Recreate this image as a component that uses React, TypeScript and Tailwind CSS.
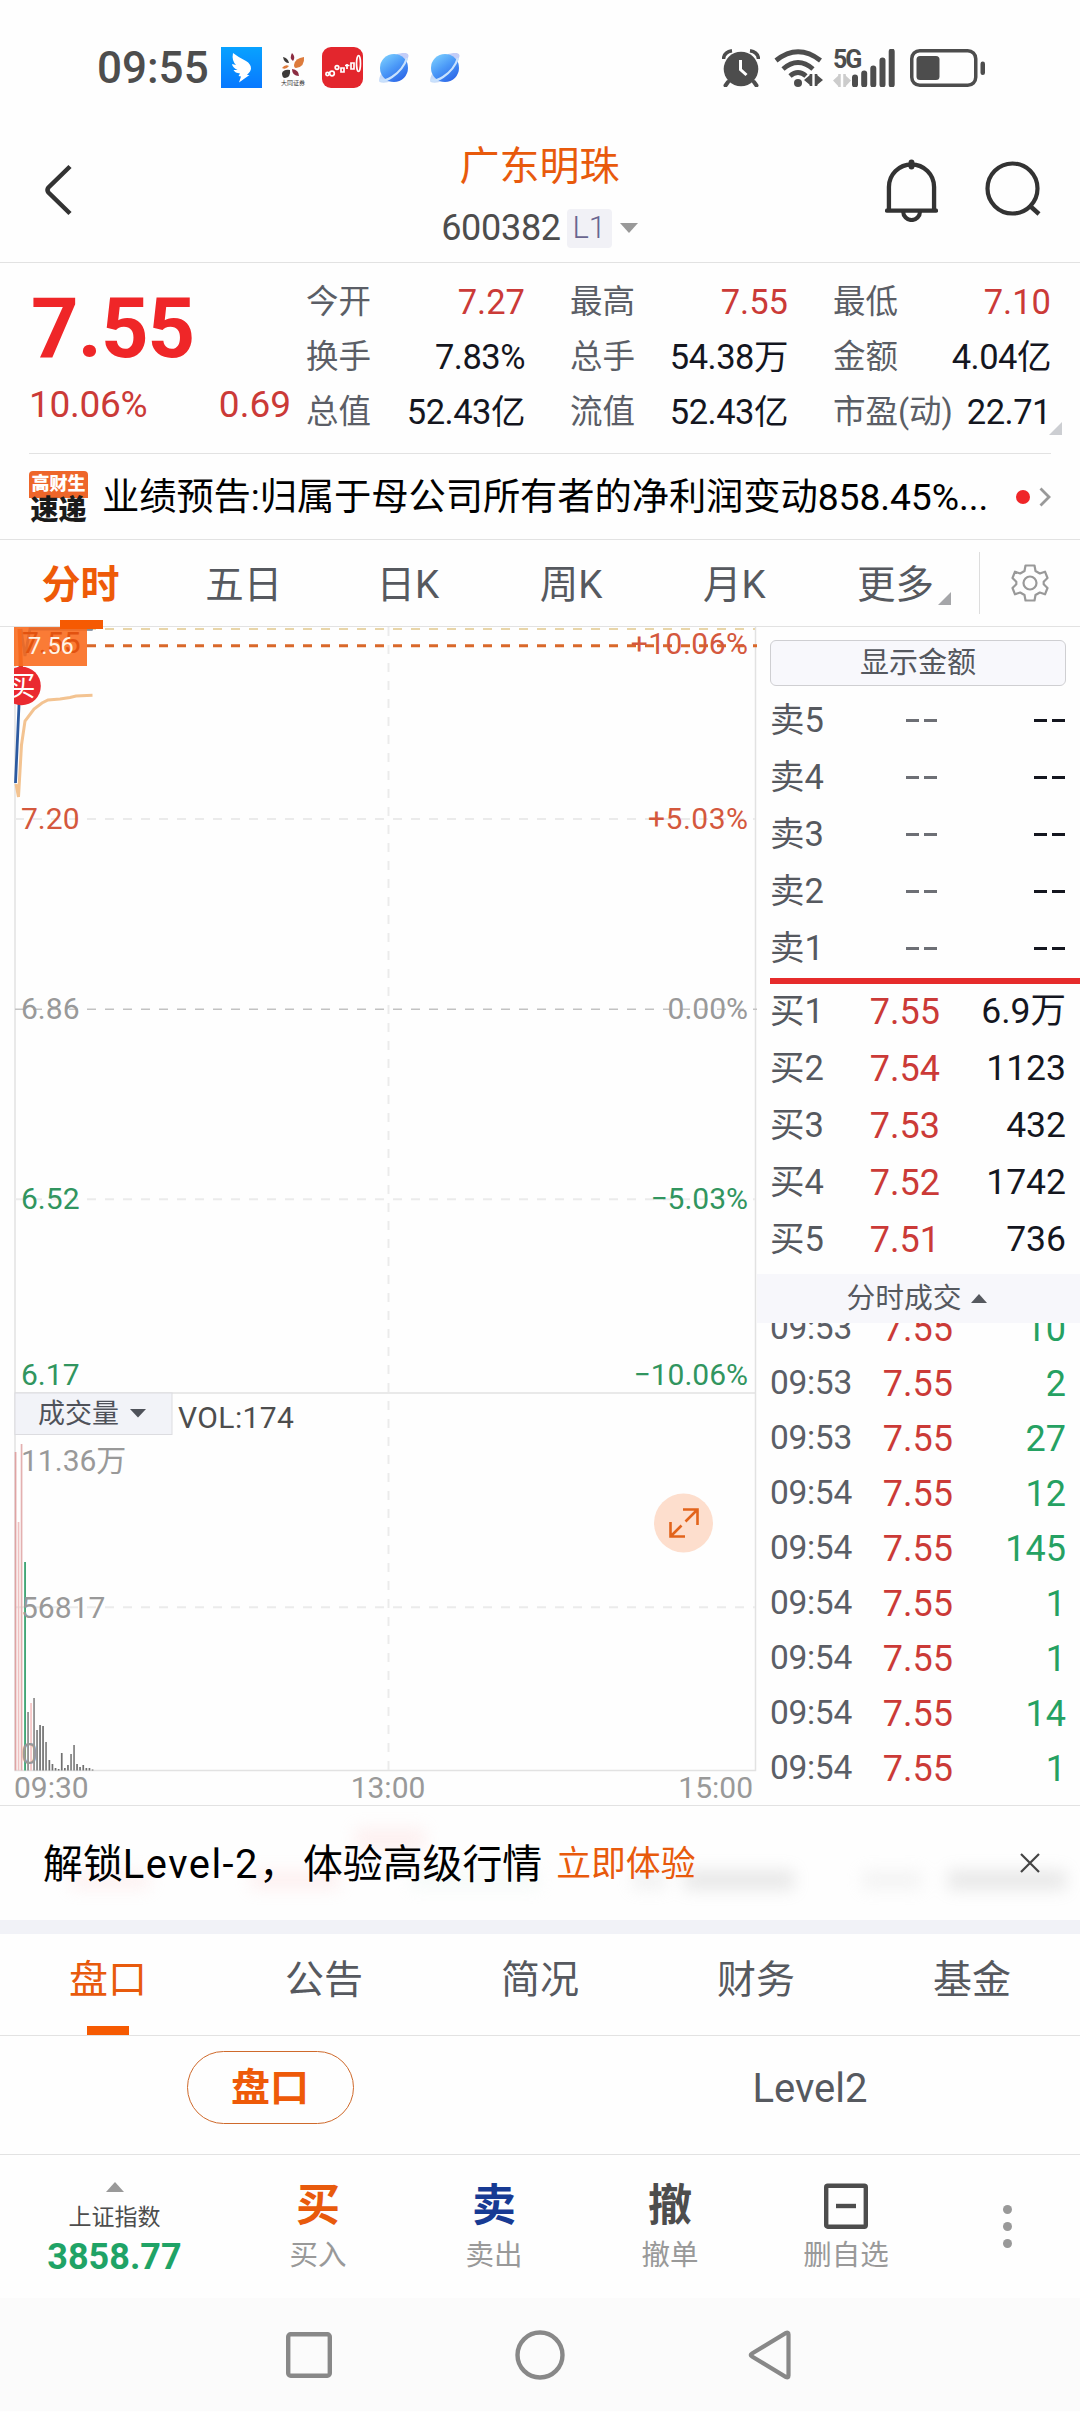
import React from "react";

type Tone = "red" | "dark";

const stats: { label: string; value: string; tone: Tone }[] = [
  { label: "今开", value: "7.27", tone: "red" },
  { label: "最高", value: "7.55", tone: "red" },
  { label: "最低", value: "7.10", tone: "red" },
  { label: "换手", value: "7.83%", tone: "dark" },
  { label: "总手", value: "54.38万", tone: "dark" },
  { label: "金额", value: "4.04亿", tone: "dark" },
  { label: "总值", value: "52.43亿", tone: "dark" },
  { label: "流值", value: "52.43亿", tone: "dark" },
  { label: "市盈(动)", value: "22.71", tone: "dark" },
];

const bids: [string, string, string][] = [
  ["买1", "7.55", "6.9万"],
  ["买2", "7.54", "1123"],
  ["买3", "7.53", "432"],
  ["买4", "7.52", "1742"],
  ["买5", "7.51", "736"],
];

const trades: [string, string, string][] = [
  ["09:53", "7.55", "10"],
  ["09:53", "7.55", "2"],
  ["09:53", "7.55", "27"],
  ["09:54", "7.55", "12"],
  ["09:54", "7.55", "145"],
  ["09:54", "7.55", "1"],
  ["09:54", "7.55", "1"],
  ["09:54", "7.55", "14"],
  ["09:54", "7.55", "1"],
];

/* Volume bars: x centre, top y, colour */
const bars: [number, number, string][] = [
  [15.5, 1452, "#dfa3a3"],
  [18.5, 1522, "#efc0c0"],
  [21.5, 1444, "#e3b0b0"],
  [25, 1562, "#2f9d68"],
  [28, 1712, "#8a8a8a"],
  [31, 1703, "#f5c4c4"],
  [34, 1698, "#8a8a8a"],
  [37, 1730, "#808080"],
  [40, 1725, "#707070"],
  [43, 1726, "#707070"],
  [46, 1742, "#808080"],
  [49.3, 1760, "#707070"],
  [52.4, 1764, "#707070"],
  [55.5, 1768, "#707070"],
  [58.6, 1769, "#707070"],
  [61.7, 1753, "#707070"],
  [64.8, 1768, "#707070"],
  [67.9, 1765, "#707070"],
  [71, 1754, "#808080"],
  [74, 1745, "#808080"],
  [77, 1764, "#707070"],
  [80, 1767, "#707070"],
  [83.2, 1765, "#707070"],
  [86.3, 1768, "#707070"],
  [89.4, 1768, "#707070"],
  [92.5, 1769.5, "#707070"],
];

function Planet() {
  return (
    <svg width="30" height="30" viewBox="0 0 30 30">
      <defs>
        <linearGradient id="planet" x1="0.1" y1="0" x2="0.8" y2="1">
          <stop offset="0" stopColor="#7fd2ff" />
          <stop offset="0.5" stopColor="#4a98f7" />
          <stop offset="1" stopColor="#2a62e6" />
        </linearGradient>
      </defs>
      <path d="M18 1 Q30 -2 29.5 3 Q29 8 25 13 L15 12Z" fill="#c3cdf8" />
      <path d="M4 18 Q-1 25 0.5 29 Q5 31 13 28Z" fill="#c6daf8" />
      <circle cx="15" cy="15" r="14" fill="url(#planet)" />
      <path d="M1 27 Q5 29 13 24 Q24 17 28 5" fill="none" stroke="#c9e2fd" strokeWidth="2.2" />
    </svg>
  );
}

function StatusBar() {
  return (
    <div className="flex h-[135px] items-center pl-[97px] pr-[94px] text-[#4d4d4d]">
      <span className="w-[124px] text-[44px] font-medium leading-[44px]">09:55</span>
      <svg width="41" height="41" viewBox="0 0 41 41" className="shrink-0">
        <defs>
          <linearGradient id="wing" x1="0" y1="0" x2="0" y2="1">
            <stop offset="0" stopColor="#08a2ff" />
            <stop offset="1" stopColor="#0878ff" />
          </linearGradient>
        </defs>
        <rect width="41" height="41" fill="url(#wing)" />
        <path d="M12 6 Q17 10 25 14 Q30 17 30 21.500 Q30 24 26 28 L28.500 28 L18 35.500 L20 29.500 L17.500 29 L19 26.500 Q14 26 12.500 23 L16.500 23 Q11.500 20.500 11 17 L15 18 Q10.500 13.500 12 6Z" fill="#fff" />
      </svg>
      <div className="ml-[17px] flex w-[28px] shrink-0 flex-col items-center pt-1">
        <svg width="24" height="26" viewBox="0 0 24 26">
          <path d="M2 4 Q7 5 8 10 Q3 10 2 4Z" fill="#3d3a39" />
          <path d="M11 0 Q15 4 12 8 Q8 5 11 0Z" fill="#8c2c42" />
          <path d="M23 4 Q24 14 15 15 Q13 15 13 12 Q14 5 23 4Z" fill="#dd7b3c" />
          <path d="M1 15 Q4 11 8 13 Q5 17 1 15Z" fill="#dd7b3c" />
          <path d="M11 16 Q18 17 18 23 Q11 23 11 16Z" fill="#8c2c42" />
          <path d="M1 20 Q3 16 9 17 Q10 24 4 25 Q1 25 1 20Z" fill="#3d3a39" />
        </svg>
        <span className="whitespace-nowrap text-[6px] leading-[8px] text-[#333]">大同证券</span>
      </div>
      <svg width="41" height="41" viewBox="0 0 41 41" className="ml-[15px] shrink-0">
        <rect width="41" height="41" rx="9" fill="#e3262d" />
        <g fill="none" stroke="#fff" strokeWidth="1.700">
          <circle cx="5.500" cy="27" r="1.600" />
          <circle cx="10" cy="26.500" r="2.300" />
          <circle cx="15" cy="20.500" r="1.800" />
          <path d="M19 21h3v4h-3z M25 17v5 M23 18.500h4.500 M29 16h3v6h-3z" />
          <ellipse cx="36.500" cy="16.500" rx="2" ry="8" />
        </g>
      </svg>
      <div className="ml-[16px] flex gap-[21px]">
        <Planet />
        <Planet />
      </div>
      <svg width="38" height="38" viewBox="0 0 38 38" className="ml-auto shrink-0">
        <circle cx="19" cy="20" r="17.300" fill="#4d4d4d" />
        <path d="M6 33 L3.500 36.500 M32 33 L34.500 36.500" stroke="#4d4d4d" strokeWidth="4" strokeLinecap="round" />
        <path d="M1.500 10 Q2 3 10 1.800 M36.500 10 Q36 3 28 1.800" stroke="#4d4d4d" strokeWidth="3.500" fill="none" />
        <path d="M18.500 11v9.500l6 5.500" fill="none" stroke="#fff" strokeWidth="3" />
      </svg>
      <svg width="49" height="38" viewBox="0 0 49 38" className="ml-[14px] shrink-0">
        <g fill="none" stroke="#4d4d4d" strokeWidth="4.800">
          <path d="M2 11.500 Q24 -6 46.500 11.500" />
          <path d="M9 20 Q24 7 39 20" />
          <path d="M16 27 Q24 20 32 27" />
        </g>
        <circle cx="24" cy="34" r="4" fill="#4d4d4d" />
        <path d="M37 25v12M42 25v12" stroke="#4d4d4d" strokeWidth="2.600" />
        <path d="M36 26v10l-6-5zM43 26v10l6-5z" fill="#4d4d4d" />
      </svg>
      <div className="ml-[10px] flex h-[38px] items-end">
        <div className="flex h-full w-[19px] flex-col justify-between">
          <span className="-mt-[1px] text-[25px] font-bold leading-[23px] tracking-[-2px]">5G</span>
          <svg width="18" height="13" viewBox="0 0 18 13">
            <path d="M0 6.500 6 1v12zM18 6.500 12 1v12z" fill="#ccc" />
            <path d="M6.500 0v13M11.500 0v13" stroke="#ccc" strokeWidth="2.500" />
          </svg>
        </div>
        <svg width="44" height="38" viewBox="0 0 44 38">
          <path d="M3 28.500V35.500M12.200 24.500V35.500M21.300 19.500V35.500M30.500 11.500V35.500M39.700 2.500V35.500" stroke="#4d4d4d" strokeWidth="6" strokeLinecap="round" />
        </svg>
      </div>
      <svg width="76" height="38" viewBox="0 0 76 38" className="ml-[14px] shrink-0">
        <rect x="1.750" y="1.750" width="64" height="34.500" rx="8" fill="none" stroke="#4d4d4d" strokeWidth="3.500" />
        <rect x="6.500" y="7" width="23" height="24" rx="3.500" fill="#4d4d4d" />
        <rect x="70.500" y="12.500" width="4.500" height="13.500" rx="2.200" fill="#4d4d4d" />
      </svg>
    </div>
  );
}

function Header() {
  return (
    <div className="flex h-[128px] items-start justify-between border-b border-[#e2e2e2] pl-[45px] pr-[39px]">
      <div className="w-[149px] pt-[29px]">
        <svg width="28" height="52" viewBox="0 0 28 52">
          <path d="M25 2.500 L3.500 23.500 Q1.500 26 3.500 28.500 L25 49.500" fill="none" stroke="#333" strokeWidth="4.500" />
        </svg>
      </div>
      <div className="flex flex-col items-center pt-[2px]">
        <h1 className="text-[40px] font-normal leading-[60px] text-[#e85a0c]">广东明珠</h1>
        <div className="mt-[6px] flex h-[50px] items-center">
          <span className="text-[36px] tracking-[-0.3px] text-[#4d4d4d]">600382</span>
          <span className="ml-[6px] flex h-[39px] w-[45px] items-center justify-center rounded bg-[#f1f1f6] text-[31px] font-light text-[#69658f]">L1</span>
          <svg width="18" height="10" viewBox="0 0 18 10" className="ml-[8px]"><path d="M0 0h18L9 10z" fill="#999" /></svg>
        </div>
      </div>
      <div className="flex w-[156px] gap-[47px] pt-[23px]">
        <svg width="54" height="64" viewBox="0 0 54 64">
          <path d="M4 52V29a23 23 0 0 1 46 0V52" fill="none" stroke="#333" strokeWidth="4.400" />
          <path d="M2 53H52" stroke="#333" strokeWidth="4.400" strokeLinecap="round" />
          <path d="M18.500 54a8.600 8.600 0 0 0 17.200 0" fill="none" stroke="#333" strokeWidth="4.200" />
          <path d="M27 4v4" stroke="#333" strokeWidth="6" strokeLinecap="round" />
        </svg>
        <svg width="56" height="64" viewBox="0 0 56 64" className="shrink-0">
          <circle cx="27.500" cy="30.500" r="25" fill="none" stroke="#333" strokeWidth="4.200" />
          <path d="M44 47 L54 56" stroke="#333" strokeWidth="4.400" />
        </svg>
      </div>
    </div>
  );
}

function Quote() {
  return (
    <div className="mx-[29px] flex h-[191px] border-b border-[#e2e2e2]">
      <div className="w-[277px] pt-[24px]">
        <div className="pl-[2px] text-[83px] font-bold leading-[84px] tracking-[-0.900px] text-[#ef2628]">7.55</div>
        <div className="mt-[12px] flex justify-between pr-[15px] text-[37px] leading-[44px] text-[#cb3a37]">
          <span className="tracking-[-0.300px]">10.06%</span>
          <span>0.69</span>
        </div>
      </div>
      <div className="relative grid flex-1 grid-cols-[219px_218px_218px] content-start gap-x-[45px] pt-[12px]">
        {stats.map((s) => (
          <div key={s.label} className="flex h-[55px] items-center justify-between whitespace-nowrap">
            <span className="text-[32.500px] text-[#5b5e66]">{s.label}</span>
            <span className={s.tone === "red" ? "text-[34.500px] text-[#cb3a37]" : "text-[34.500px] tracking-[-0.500px] text-[#14161f]"}>{s.value}</span>
          </div>
        ))}
        <svg width="13" height="13" viewBox="0 0 13 13" className="absolute bottom-[18px] right-[-11px]"><path d="M13 0V13H0z" fill="#ccced2" /></svg>
      </div>
    </div>
  );
}

function News() {
  return (
    <div className="flex h-[86px] items-center border-b border-[#e2e2e2] pl-[29px] pr-[29px]">
      <div className="mt-[2px] flex w-[59px] shrink-0 flex-col items-center">
        <span className="flex h-[27px] w-full items-center justify-center rounded-t bg-[#ee662a] text-[18px] font-black leading-none text-white">高财生</span>
        <span className="h-[27px] text-[28px] font-black leading-[26px] text-[#1b1b1b]">速递</span>
      </div>
      <span className="ml-[14px] mt-[3px] whitespace-nowrap text-[37.300px] tracking-[-0.100px] text-black">业绩预告:归属于母公司所有者的净利润变动858.45%...</span>
      <span className="ml-auto h-[14px] w-[14px] rounded-full bg-[#ef2628]" />
      <svg width="12" height="20" viewBox="0 0 12 20" className="ml-[9px]"><path d="M1.500 1.500 10 10 1.500 18.500" fill="none" stroke="#999" strokeWidth="2.800" /></svg>
    </div>
  );
}

function ChartTabs() {
  return (
    <div className="flex h-[87px] border-b border-[#e2e2e2] text-[38.500px] text-[#56595f]">
      <div className="grid w-[979px] grid-cols-6 text-center leading-[90px]">
        <div className="relative pr-[2px] text-[39px] font-bold text-[#ee5a08]">
          分时
          <span className="absolute bottom-px left-[60px] h-[9px] w-[43px] bg-[#f65a02]" />
        </div>
        <div className="pr-[2px]">五日</div>
        <div>日K</div>
        <div>周K</div>
        <div>月K</div>
        <div className="flex items-center justify-center pl-[13px]">
          更多
          <svg width="13" height="13" viewBox="0 0 13 13" className="ml-[4px] mt-[26px]"><path d="M13 0V13H0z" fill="#a5a6a9" /></svg>
        </div>
      </div>
      <div className="my-auto flex h-[62px] flex-1 items-center justify-center border-l border-[#ddd]">
        <svg width="38" height="38" viewBox="0 0 38 38" fill="none" stroke="#999" strokeWidth="2.200" strokeLinejoin="round">
          <path d="M14.500 1.500h9l1 5.500 4.300 2.500 5.200-1.800L36.500 14l-3.800 3.700v2.600L36.500 24l-2.500 6.300-5.200-1.800-4.300 2.500-1 5.500h-9l-1-5.500-4.300-2.500L4 30.300 1.500 24l3.800-3.700v-2.600L1.500 14 4 7.700l5.200 1.800L13.500 7z" />
          <circle cx="19" cy="19" r="6.500" />
        </svg>
      </div>
    </div>
  );
}

function Chart() {
  return (
    <svg width="757" height="1178" viewBox="0 627 757 1178" className="shrink-0 text-[30px]">
      <g stroke="#e2e2e2" strokeWidth="1.500" fill="none">
        <path d="M15 627V1770.500H755.500V627M15 1393H755" />
      </g>
      <g stroke="#ebebeb" strokeWidth="2" strokeDasharray="9 9" fill="none">
        <path d="M388.500 627V1770M15 819H755M15 1199.300H755M15 1607.300H755" />
      </g>
      <path d="M15 1009.300H757" stroke="#c2c2c2" strokeWidth="1.500" strokeDasharray="9 9" />
      <path d="M87 629H755" stroke="#e8d5a8" strokeWidth="2" strokeDasharray="9 9" />
      <path d="M87 645.700H757" stroke="#d9682a" strokeWidth="3" strokeDasharray="9 9" />

      {bars.map(([x, top, color]) => (
        <rect key={x} x={x - 0.8} y={top} width="1.700" height={1770.5 - top} fill={color} />
      ))}

      <path d="M16 784 18.500 797 21.500 745 25 721 34 709 42 703 48 700 60 699 70 697.500 76 696 92.500 695.300" fill="none" stroke="#f3c391" strokeWidth="3" />
      <path d="M15.500 783 19 705 21 629 25 656 30 629H92.500" fill="none" stroke="#2c5aa0" strokeWidth="2.800" />
      <path d="M60 629H92.500" stroke="#8b8b8b" strokeWidth="3" />
      <path d="M19.500 629 21 668" stroke="#d14412" strokeWidth="4" />

      <g fill="#d4583d" letterSpacing="0.500">
        <text x="748.500" y="653.500" textAnchor="end">+10.06%</text>
        <text x="21" y="829" letterSpacing="0">7.20</text>
        <text x="748.500" y="829" textAnchor="end">+5.03%</text>
      </g>
      <g fill="#999">
        <text x="21" y="1019">6.86</text>
        <text x="748" y="1019" textAnchor="end">0.00%</text>
        <text x="21" y="1470.500">11.36万</text>
        <text x="21" y="1617.500">56817</text>
        <text x="21" y="1763.500">0</text>
        <text x="14" y="1797.500">09:30</text>
        <text x="388" y="1797.500" textAnchor="middle">13:00</text>
        <text x="753" y="1797.500" textAnchor="end">15:00</text>
      </g>
      <g fill="#31955f">
        <text x="21" y="1209">6.52</text>
        <text x="748" y="1209" textAnchor="end">−5.03%</text>
        <text x="21" y="1385">6.17</text>
        <text x="748" y="1385" textAnchor="end">−10.06%</text>
      </g>

      <rect x="14" y="627" width="73" height="39" fill="#fa6d20" fillOpacity="0.900" />
      <text x="22" y="653" fill="#e2520f">7.55</text>
      <text x="28" y="654" fill="#fff4e6" fontSize="23.500">7.56</text>
      <clipPath id="plot"><rect x="14" y="627" width="742" height="1144" /></clipPath>
      <g clipPath="url(#plot)">
        <circle cx="21.500" cy="686" r="19.300" fill="#ea2a30" />
        <text x="22" y="695.500" textAnchor="middle" fill="#fff" fontSize="27">买</text>
      </g>

      <rect x="15" y="1393" width="157" height="41.500" fill="#f2f3f8" stroke="#dcdce0" strokeWidth="1" />
      <text x="38" y="1423" fill="#4f525a" fontSize="27">成交量</text>
      <path d="M130 1409H146L138 1417.500z" fill="#4f525a" />
      <text x="178" y="1428" fill="#4d4d4d" letterSpacing="0.400">VOL:174</text>

      <circle cx="683.500" cy="1523" r="29.500" fill="#fddecd" />
      <path d="M683 1509.500H697.500V1525M697 1510 685.500 1521.500M670.500 1522V1536.500H685M671 1536 681.500 1525.500" fill="none" stroke="#e2641c" strokeWidth="2.600" />
    </svg>
  );
}

function OrderBook() {
  return (
    <div className="flex h-[1178px] flex-1 flex-col overflow-hidden pt-[13px]">
      <div className="ml-[13px] flex h-[46px] w-[296px] shrink-0 items-center justify-center rounded-md border border-[#cfcfd2] bg-[#f8f8fc] pt-px text-[29px] text-[#54575e]">显示金额</div>
      <div className="mt-[6px] pl-[13px] pr-[15px]">
        {[5, 4, 3, 2, 1].map((n) => (
          <div key={n} className="grid h-[57px] grid-cols-[61px_106px_1fr] items-center text-[34.500px] text-[#56595f]">
            <span className="whitespace-nowrap">卖{n}</span>
            <span className="flex justify-end gap-[5px]"><i className="h-[3px] w-[13px] bg-[#6d6f75]" /><i className="h-[3px] w-[13px] bg-[#6d6f75]" /></span>
            <span className="flex justify-end gap-[5px]"><i className="h-[3px] w-[13px] bg-[#14161f]" /><i className="h-[3px] w-[13px] bg-[#14161f]" /></span>
          </div>
        ))}
      </div>
      <div className="ml-[13px] mt-px h-[6px] shrink-0 bg-[#e62b2b]" />
      <div className="-mt-px h-[291px] shrink-0 pl-[13px] pr-[14px]">
        {bids.map(([label, price, size]) => (
          <div key={label} className="grid h-[57px] grid-cols-[61px_109px_1fr] items-center text-right text-[36px]">
            <span className="whitespace-nowrap text-left text-[34.500px] text-[#56595f]">{label}</span>
            <span className="text-[#cb3a37]">{price}</span>
            <span className="text-[35.500px] text-[#14161f]">{size}</span>
          </div>
        ))}
      </div>
      <div className="flex h-[49px] shrink-0 items-center justify-center bg-[#f7f7fb] pr-[4px] text-[28.800px] text-[#56595f]">
        分时成交
        <svg width="16" height="9" viewBox="0 0 16 9" className="ml-[9px]"><path d="M0 9h16L8 0z" fill="#56595f" /></svg>
      </div>
      <div className="flex-1 overflow-hidden pl-[13px] pr-[14px]">
        <div className="mt-[-22px]">
          {trades.map(([time, price, size], i) => (
            <div key={i} className="grid h-[55px] grid-cols-[83px_100px_1fr] items-center text-right text-[36px]">
              <span className="text-left text-[33.500px] tracking-[-0.300px] text-[#5b5e66]">{time}</span>
              <span className="text-[#cb3a37]">{price}</span>
              <span className="text-[#25a162]">{size}</span>
            </div>
          ))}
        </div>
      </div>
    </div>
  );
}

function Banner() {
  return (
    <div className="relative flex h-[115px] items-center overflow-hidden border-t border-[#e2e2e2] pl-[43px] pr-[40px]">
      <div aria-hidden="true" className="absolute left-[70px] right-0 top-[64px] flex items-center opacity-25 blur-[8px]">
        <i className="h-[18px] w-[80px] bg-[#fad0d0]" />
        <i className="ml-[100px] h-[18px] w-[90px] bg-[#fbc9c9]" />
        <i className="ml-[70px] h-[16px] w-[130px] bg-[#ddefe6]" />
        <i className="ml-[92px] h-[18px] w-[34px] bg-[#ccc]" />
        <i className="ml-[18px] h-[20px] w-[110px] bg-[#a8a8a8]" />
        <i className="ml-[68px] h-[18px] w-[60px] bg-[#d4d4d4]" />
        <i className="ml-[26px] h-[20px] w-[118px] bg-[#a8a8a8]" />
      </div>
      <i aria-hidden="true" className="absolute left-[355px] top-[22px] h-[22px] w-[70px] bg-[#fbc9c9] opacity-25 blur-[8px]" />
      <span className="relative mt-[3px] whitespace-nowrap text-[39.900px] text-black">
        解锁<span className="tracking-[1.500px]">Level-2</span><span className="mr-[4px]">，</span>体验高级行情
      </span>
      <span className="relative ml-[14px] mt-[3px] whitespace-nowrap text-[34.800px] text-[#e85a0c]">立即体验</span>
      <svg width="20" height="20" viewBox="0 0 20 20" className="relative ml-auto"><path d="M1 1 19 19M19 1 1 19" stroke="#444" strokeWidth="2.200" /></svg>
    </div>
  );
}

function InfoTabs() {
  return (
    <>
      <div className="grid h-[102px] grid-cols-5 border-b border-[#e2e2e2] text-center text-[39px] leading-[93px] text-[#56595f]">
        <div className="relative text-[#e85a0c]">
          盘口
          <span className="absolute bottom-0 left-[87px] h-[9px] w-[42px] bg-[#f65a02]" />
        </div>
        <div>公告</div>
        <div>简况</div>
        <div>财务</div>
        <div>基金</div>
      </div>
      <div className="grid h-[119px] grid-cols-2 items-start border-b border-[#e2e2e2] pt-[15px]">
        <div className="mx-auto flex h-[73px] w-[167px] items-center justify-center rounded-full border border-[#cf6a2c] pt-[2px] text-[39px] font-bold text-[#ee5a08]">盘口</div>
        <div className="text-center text-[40px] leading-[76px] text-[#56595f]">Level2</div>
      </div>
    </>
  );
}

function Action({ icon, label }: { icon: React.ReactNode; label: string }) {
  return (
    <div className="flex w-[176px] flex-col items-center pt-[22px]">
      <div className="flex h-[58px] items-center text-[44px] font-bold">{icon}</div>
      <span className="mt-[2px] text-[28.500px] leading-[38px] text-[#999]">{label}</span>
    </div>
  );
}

function BottomBar() {
  return (
    <div className="flex h-[143px]">
      <div className="flex w-[230px] flex-col items-center pr-px pt-[27px]">
        <svg width="18" height="10" viewBox="0 0 18 10"><path d="M0 10h18L9 0z" fill="#999" /></svg>
        <span className="mt-[11px] text-[23px] leading-[30px] text-[#4d4d4d]">上证指数</span>
        <span className="mt-[4px] text-[36px] font-bold leading-[40px] text-[#1fa366]">3858.77</span>
      </div>
      <Action icon={<span className="text-[#e85a0c]">买</span>} label="买入" />
      <Action icon={<span className="text-[#173a93]">卖</span>} label="卖出" />
      <Action icon={<span className="text-[#4d4d4d]">撤</span>} label="撤单" />
      <Action
        icon={
          <svg width="44" height="46" viewBox="0 0 44 46">
            <rect x="2.200" y="2.700" width="39.600" height="41" rx="1.500" fill="none" stroke="#4d4d4d" strokeWidth="4.400" />
            <path d="M12 23H32" stroke="#4d4d4d" strokeWidth="4.400" />
          </svg>
        }
        label="删自选"
      />
      <div className="ml-[69px] mt-[50px] flex flex-col gap-[8px]">
        <i className="h-[9px] w-[9px] rounded-full bg-[#999]" />
        <i className="h-[9px] w-[9px] rounded-full bg-[#999]" />
        <i className="h-[9px] w-[9px] rounded-full bg-[#999]" />
      </div>
    </div>
  );
}

function SystemNav() {
  return (
    <div className="flex h-[113px] items-center justify-center gap-[183px] bg-[#fbfbfb] pr-[3px]">
      <svg width="46" height="46" viewBox="0 0 46 46"><rect x="2.200" y="2.200" width="41.600" height="41.600" rx="2.500" fill="none" stroke="#888" strokeWidth="4.400" /></svg>
      <svg width="50" height="50" viewBox="0 0 50 50"><circle cx="25" cy="25" r="22.500" fill="none" stroke="#888" strokeWidth="4.400" /></svg>
      <svg width="44" height="50" viewBox="0 0 44 50"><path d="M40.500 4.500V45.500Q40.500 48 38 47L4 26.500Q1.500 25 4 23.500L38 3Q40.500 2 40.500 4.500Z" fill="none" stroke="#888" strokeWidth="4.200" /></svg>
    </div>
  );
}

export default function App() {
  return (
    <div className="h-[2412px] w-[1080px] overflow-hidden bg-[#fefefe] font-['Roboto','Noto_Sans_CJK_SC',sans-serif]">
      <StatusBar />
      <Header />
      <Quote />
      <News />
      <ChartTabs />
      <div className="flex">
        <Chart />
        <OrderBook />
      </div>
      <Banner />
      <div className="h-[14px] bg-[#f1f2f7]" />
      <InfoTabs />
      <BottomBar />
      <SystemNav />
    </div>
  );
}
